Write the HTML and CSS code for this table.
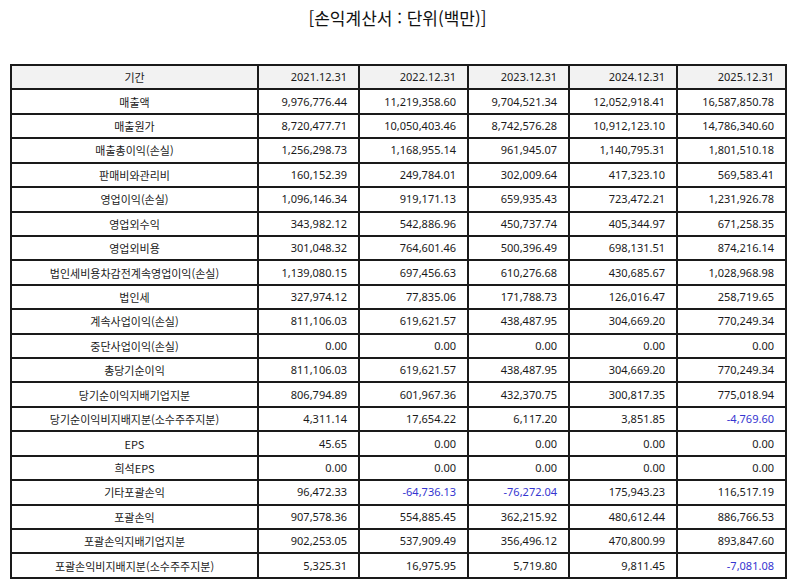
FILE: index.html
```html
<!DOCTYPE html>
<html lang="ko">
<head>
<meta charset="utf-8">
<link rel="stylesheet" href="styles.css">
</head>
<body>
<div class="page">
  <h1 class="title">[손익계산서 : 단위(백만)]</h1>
  <table class="fin">
    <colgroup>
      <col class="c-label"><col class="c1"><col class="c2"><col class="c3"><col class="c4"><col class="c5">
    </colgroup>
    <thead>
      <tr><th class="label">기간</th><th>2021.12.31</th><th>2022.12.31</th><th>2023.12.31</th><th>2024.12.31</th><th>2025.12.31</th></tr>
    </thead>
    <tbody>
      <tr><td class="label">매출액</td><td>9,976,776.44</td><td>11,219,358.60</td><td>9,704,521.34</td><td>12,052,918.41</td><td>16,587,850.78</td></tr>
      <tr><td class="label">매출원가</td><td>8,720,477.71</td><td>10,050,403.46</td><td>8,742,576.28</td><td>10,912,123.10</td><td>14,786,340.60</td></tr>
      <tr><td class="label">매출총이익(손실)</td><td>1,256,298.73</td><td>1,168,955.14</td><td>961,945.07</td><td>1,140,795.31</td><td>1,801,510.18</td></tr>
      <tr><td class="label">판매비와관리비</td><td>160,152.39</td><td>249,784.01</td><td>302,009.64</td><td>417,323.10</td><td>569,583.41</td></tr>
      <tr><td class="label">영업이익(손실)</td><td>1,096,146.34</td><td>919,171.13</td><td>659,935.43</td><td>723,472.21</td><td>1,231,926.78</td></tr>
      <tr><td class="label">영업외수익</td><td>343,982.12</td><td>542,886.96</td><td>450,737.74</td><td>405,344.97</td><td>671,258.35</td></tr>
      <tr><td class="label">영업외비용</td><td>301,048.32</td><td>764,601.46</td><td>500,396.49</td><td>698,131.51</td><td>874,216.14</td></tr>
      <tr><td class="label">법인세비용차감전계속영업이익(손실)</td><td>1,139,080.15</td><td>697,456.63</td><td>610,276.68</td><td>430,685.67</td><td>1,028,968.98</td></tr>
      <tr><td class="label">법인세</td><td>327,974.12</td><td>77,835.06</td><td>171,788.73</td><td>126,016.47</td><td>258,719.65</td></tr>
      <tr><td class="label">계속사업이익(손실)</td><td>811,106.03</td><td>619,621.57</td><td>438,487.95</td><td>304,669.20</td><td>770,249.34</td></tr>
      <tr><td class="label">중단사업이익(손실)</td><td>0.00</td><td>0.00</td><td>0.00</td><td>0.00</td><td>0.00</td></tr>
      <tr><td class="label">총당기순이익</td><td>811,106.03</td><td>619,621.57</td><td>438,487.95</td><td>304,669.20</td><td>770,249.34</td></tr>
      <tr><td class="label">당기순이익지배기업지분</td><td>806,794.89</td><td>601,967.36</td><td>432,370.75</td><td>300,817.35</td><td>775,018.94</td></tr>
      <tr><td class="label">당기순이익비지배지분(소수주주지분)</td><td>4,311.14</td><td>17,654.22</td><td>6,117.20</td><td>3,851.85</td><td class="neg">-4,769.60</td></tr>
      <tr><td class="label">EPS</td><td>45.65</td><td>0.00</td><td>0.00</td><td>0.00</td><td>0.00</td></tr>
      <tr><td class="label">희석EPS</td><td>0.00</td><td>0.00</td><td>0.00</td><td>0.00</td><td>0.00</td></tr>
      <tr><td class="label">기타포괄손익</td><td>96,472.33</td><td class="neg">-64,736.13</td><td class="neg">-76,272.04</td><td>175,943.23</td><td>116,517.19</td></tr>
      <tr><td class="label">포괄손익</td><td>907,578.36</td><td>554,885.45</td><td>362,215.92</td><td>480,612.44</td><td>886,766.53</td></tr>
      <tr><td class="label">포괄손익지배기업지분</td><td>902,253.05</td><td>537,909.49</td><td>356,496.12</td><td>470,800.99</td><td>893,847.60</td></tr>
      <tr><td class="label">포괄손익비지배지분(소수주주지분)</td><td>5,325.31</td><td>16,975.95</td><td>5,719.80</td><td>9,811.45</td><td class="neg">-7,081.08</td></tr>
    </tbody>
  </table>
</div>
</body>
</html>
```

FILE: styles.css
```css
html, body {
  margin: 0;
  padding: 0;
  background: #ffffff;
}

.page {
  padding: 5px 9px 0 10px;
  font-family: "Noto Sans", "Noto Sans CJK KR", sans-serif;
  color: #1a1a1a;
}

.title {
  margin: 0;
  height: 59px;
  font-family: "Noto Sans CJK KR", "Noto Sans", sans-serif;
  font-size: 17px;
  font-weight: 400;
  line-height: 26px;
  text-align: center;
  color: #111111;
}

.fin {
  width: 775px;
  border-collapse: collapse;
  table-layout: fixed;
  font-size: 11px;
}

.c-label { width: 247px; }
.c1 { width: 101px; }
.c2 { width: 109px; }
.c3 { width: 101px; }
.c4 { width: 108px; }
.c5 { width: 109px; }

.fin tr {
  height: 24.43px;
}

.fin th,
.fin td {
  border: 2px solid #1a1a1a;
  padding: 0 11px 0 4px;
  text-align: right;
  font-weight: 400;
  white-space: nowrap;
  line-height: 14px;
}

.fin th {
  background: #f2f2f2;
}

.fin .label {
  text-align: center;
  padding: 0 4px;
  font-family: "Noto Sans CJK KR", "Noto Sans", sans-serif;
}

.fin .neg {
  color: #3535d0;
}
```
